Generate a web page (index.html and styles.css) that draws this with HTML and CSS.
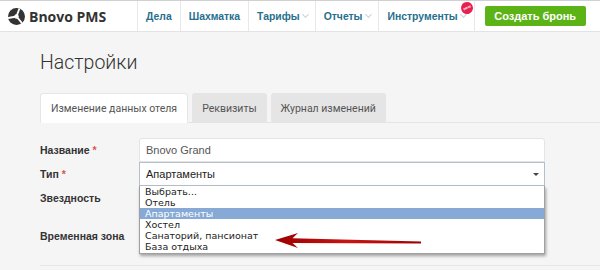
FILE: index.html
```html
<!DOCTYPE html>
<html>

<head>
  <title>Bnovo PMS — Настройки</title>
  <meta charset="utf-8">
  <link rel="stylesheet" href="styles.css">
</head>

<body>
  <div class="topbar">
    <div class="brand">
      <svg class="logo" width="17" height="17" viewBox="0 0 20 20">
        <circle cx="10" cy="10" r="10" fill="#333" />
        <path d="M10 10 L10 0 M10 10 L18.7 15 M10 10 L1.3 15" stroke="#fff" stroke-width="2.2" fill="none" transform="rotate(20 10 10)" />
        <circle cx="10" cy="10" r="2.6" fill="#fff" />
      </svg>
      <span>Bnovo PMS</span>
    </div>
    <ul class="nav">
      <li>Дела</li>
      <li>Шахматка</li>
      <li class="drop">Тарифы</li>
      <li class="drop">Отчеты</li>
      <li class="drop wide">Инструменты<span class="badge">new</span></li>
    </ul>
    <button class="book">Создать бронь</button>
  </div>

  <div class="page">
    <h1>Настройки</h1>
    <div class="tabs">
      <div class="tab active">Изменение данных отеля</div>
      <div class="tab">Реквизиты</div>
      <div class="tab">Журнал изменений</div>
    </div>

    <div class="form">
      <div class="row">
        <label>Название <b>*</b></label>
        <div class="field">Bnovo Grand</div>
      </div>
      <div class="row">
        <label>Тип <b>*</b></label>
        <div class="field select">Апартаменты</div>
        <ul class="options">
          <li>Выбрать...</li>
          <li>Отель</li>
          <li class="on">Апартаменты</li>
          <li>Хостел</li>
          <li>Санаторий, пансионат</li>
          <li>База отдыха</li>
        </ul>
      </div>
      <div class="row">
        <label>Звездность</label>
      </div>
      <div class="row gap">
        <label>Временная зона</label>
      </div>
      <svg class="arrow" width="150" height="20" viewBox="0 0 150 20">
        <defs>
          <linearGradient id="red" x1="0" x2="1" y1="0" y2="0">
            <stop offset="0" stop-color="#9c0000" />
            <stop offset="0.5" stop-color="#c81414" />
            <stop offset="1" stop-color="#a00000" />
          </linearGradient>
        </defs>
        <path d="M1 9 L24 2 L18.5 7.2 L147 10.4 L147 12.6 L18.5 12 L24 17 Z" fill="url(#red)" />
      </svg>
    </div>
  </div>
</body>

</html>
```

FILE: styles.css
```css
* {
  padding: 0;
  margin: 0;
  box-sizing: border-box;
}

body {
  width: 600px;
  height: 270px;
  overflow: hidden;
  background: #f5f5f5;
  font-family: "Liberation Sans", Arial, sans-serif;
  color: #333;
}

.topbar {
  height: 32px;
  display: flex;
  align-items: stretch;
  background: #fff;
  border-top: 1px solid #d0d0d0;
  border-bottom: 1px solid #e3e3e3;
}

.brand {
  width: 137px;
  flex-shrink: 0;
  display: flex;
  align-items: center;
  gap: 4px;
  padding-left: 8px;
  font-family: "Open Sans", sans-serif;
  font-weight: bold;
  font-size: 14px;
  color: #333;
}

.nav {
  list-style: none;
  display: flex;
}

.nav li {
  position: relative;
  display: flex;
  align-items: center;
  padding: 0 8px;
  border-left: 1px solid #e8e8e8;
  font-weight: bold;
  font-size: 10.4px;
  white-space: nowrap;
  color: #276f8e;
}

.nav li.drop {
  padding: 0 7px 0 8px;
}

.nav li.wide {
  padding: 0 8px 0 9px;
  border-right: 1px solid #e8e8e8;
}

.nav .drop::after {
  content: "";
  width: 4px;
  height: 4px;
  margin: -3px 0 0 3px;
  border-right: 1px solid #c5d3da;
  border-bottom: 1px solid #c5d3da;
  transform: rotate(45deg);
}

.badge {
  position: absolute;
  top: 1px;
  right: 1px;
  width: 12px;
  height: 12px;
  border-radius: 50%;
  background: #e8204f;
  color: #fff;
  font-size: 4px;
  line-height: 12px;
  text-align: center;
  transform: rotate(-25deg);
}

.book {
  align-self: center;
  margin-left: 10px;
  width: 101px;
  height: 20px;
  border: none;
  border-radius: 2px;
  background: #5cb316;
  color: #fff;
  font-family: "Liberation Sans", Arial, sans-serif;
  font-weight: bold;
  font-size: 11px;
}

.page {
  padding-left: 40px;
}

h1 {
  padding-top: 19px;
  height: 61px;
  font-family: Roboto, sans-serif;
  font-weight: 300;
  font-size: 19.5px;
  color: #333;
}

.tabs {
  display: flex;
  gap: 4px;
  height: 30px;
  border-bottom: 1px solid #e4e4e4;
}

.tab {
  padding: 9px 10px 0;
  border-radius: 3px 3px 0 0;
  background: #e5e5e5;
  font-family: Roboto, sans-serif;
  font-size: 10.5px;
  white-space: nowrap;
  color: #555;
}

.tab.active {
  background: #fff;
  border: 1px solid #e6e6e6;
  border-bottom: none;
  padding: 8px 10px 0;
  margin-bottom: -1px;
}

.form {
  position: relative;
  padding-top: 15px;
  height: 143px;
  border-bottom: 1px solid #e6e6e6;
}

.row {
  position: relative;
  display: flex;
  align-items: center;
  height: 24px;
}

.row.gap {
  margin-top: 14px;
}

label {
  width: 99px;
  font-weight: bold;
  font-size: 10.5px;
  color: #333;
}

label b {
  color: #d9534f;
}

.field {
  width: 406px;
  height: 24px;
  padding: 5px 6px;
  background: #fff;
  border: 1px solid #e4e4e4;
  border-radius: 3px 3px 0 0;
  font-size: 11px;
  color: #555;
}

.field.select {
  position: relative;
  border-color: #b4bfcc;
  border-radius: 0;
  color: #222;
}

.field.select::after {
  content: "";
  position: absolute;
  right: 5px;
  top: 10px;
  border: 3px solid transparent;
  border-top-color: #444;
}

.options {
  position: absolute;
  left: 99px;
  top: 24px;
  width: 406px;
  list-style: none;
  background: #fff;
  border: 1px solid #a0a0a0;
  border-top: none;
  box-shadow: 1px 2px 3px rgba(0, 0, 0, 0.35);
  padding-bottom: 1px;
  z-index: 2;
}

.options li {
  height: 11px;
  line-height: 11px;
  padding-left: 5px;
  font-family: "DejaVu Sans", sans-serif;
  font-size: 9.5px;
  color: #222;
}

.options li.on {
  background: #86a9d5;
  color: #fff;
}

.arrow {
  position: absolute;
  left: 234px;
  top: 108px;
  z-index: 3;
}
```
